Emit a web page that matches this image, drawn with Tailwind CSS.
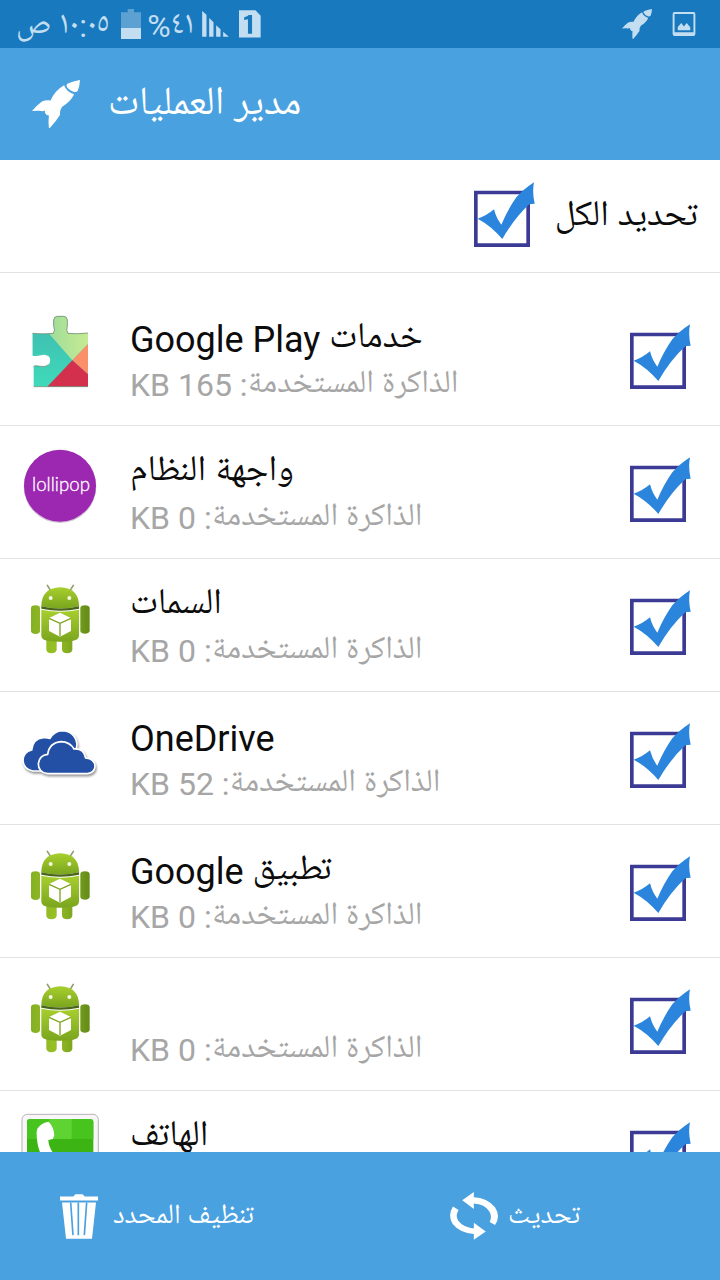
<!DOCTYPE html>
<html lang="ar" dir="rtl">
<head>
<meta charset="utf-8">
<meta name="viewport" content="width=device-width, initial-scale=1">
<title>مدير العمليات</title>
<script src="https://cdn.jsdelivr.net/npm/@tailwindcss/browser@4"></script>
</head>
<body class="flex h-screen flex-col bg-white font-[Roboto,'Noto_Naskh_Arabic_UI','DejaVu_Sans',sans-serif] text-[#0c0c0c]">

<svg class="absolute size-0" aria-hidden="true">
  <defs>
    <linearGradient id="droid" x1="0" x2="0" y1="0" y2="1"><stop offset="0" stop-color="#a8cf2e"/><stop offset="1" stop-color="#7aa51e"/></linearGradient>
    <linearGradient id="limb" x1="0" x2="1" y1="0" y2="0"><stop offset="0" stop-color="#85b022"/><stop offset=".4" stop-color="#97c026"/><stop offset="1" stop-color="#648c18"/></linearGradient>
    <linearGradient id="teal" x1="0" x2="0" y1="0" y2="1"><stop offset="0" stop-color="#3fb7ae"/><stop offset="1" stop-color="#3fdcbb"/></linearGradient>
    <linearGradient id="lime" x1="0" x2="1" y1="0" y2="0"><stop offset="0" stop-color="#9fdc9a"/><stop offset="1" stop-color="#c8ec92"/></linearGradient>
    <clipPath id="piece"><path d="M97 130Q130 133 160 130Q166 122 161 108V90Q162 80 172 79H191Q201 80 202 90V108Q198 122 204 130Q232 133 264 129V290H101V228Q112 226 120 229Q136 232 146 224Q156 211 146 199Q136 191 122 196Q110 199 97 197Z"/></clipPath>
  </defs>
  <symbol id="rocket" viewBox="96 239 145 145">
    <path d="M241 239Q240 258 234 272Q230 276 223 275Q204 268 200 256Q200 250 208 248Q223 242 241 239ZM193 255Q200 275 223 282Q214 303 188 319Q179 331 181 344Q170 362 150 384L147 383Q145 364 147 346Q139 346 137 341Q134 336 135 331Q128 335 120 332Q109 331 96 333Q112 314 126 304Q138 299 152 301Q166 270 193 255Z"/>
  </symbol>
  <symbol id="tick-box" viewBox="90 72 183 195">
    <path fill="none" stroke="#3b3a94" stroke-width="11" d="M95.500 103.500H252.500V261.500H95.500Z"/>
    <path fill="#2b85dc" d="M101 182Q128 173 150 154Q157 181 172 200Q192 153 217 118Q238 94 270 73Q264 102 272 137L256 139Q212 179 175 243Q142 204 101 182Z"/>
  </symbol>
  <symbol id="android" viewBox="60 57 240 240">
    <path stroke="#8f9f6a" stroke-width="5" stroke-linecap="round" d="M142 76 152 92M220 76 210 92"/>
    <path fill="url(#droid)" d="M124 139Q124 84 181 82Q237 84 237 139Q181 152 124 139Z"/>
    <path fill="#48651a" d="M124 139Q181 152 237 139V146Q181 158 124 146Z"/>
    <path fill="url(#limb)" d="M139 232H170V270Q167 280 154 280Q142 280 139 270ZM186 232H217V270Q214 280 201 280Q189 280 186 270ZM93 143Q95 136 106 136Q118 136 120 143V214Q118 222 107 222Q95 222 93 214ZM241 143Q243 136 255 136Q266 136 269 143V214Q266 221 255 221Q243 221 241 214Z"/>
    <path fill="url(#droid)" d="M124 149Q181 161 237 149V228Q235 240 220 242Q181 248 141 242Q126 240 124 228Z"/>
    <circle cx="152" cy="114" r="6" fill="#f4f8e4"/><circle cx="208" cy="114" r="6" fill="#f4f8e4"/>
    <path fill="#fff" d="M180 158 213 174V213L180 230 147 213V174Z"/>
    <path fill="none" stroke="#7ea31f" stroke-width="4" d="M147 175 180 190 213 175M180 190V229"/>
  </symbol>
</svg>

<div class="flex h-12 shrink-0 items-center justify-between bg-[#1979be] px-4 text-[#c3def1]">
  <div class="flex items-center gap-5 pr-2">
    <svg class="size-6" viewBox="217 33 71 75" role="img" aria-label="صورة"><path fill="none" stroke="currentColor" stroke-width="6" d="M223 36H282Q285 36 285 40V101Q285 105 282 105H223Q220 105 220 101V40Q220 36 223 36Z"/><path fill="currentColor" d="M220 96H285V105H220ZM233 90V80L244 67 252 78 261 67 272 81V90Z"/></svg>
    <svg class="size-[30px] fill-current" role="img" aria-label="مدير العمليات"><use href="#rocket"/></svg>
  </div>
  <div class="flex items-center">
    <svg class="ml-[10px] h-7 w-[22px]" viewBox="722 32 64 80" role="img" aria-label="شريحة 1"><path fill="currentColor" d="M722 32H770L785 48V111H722Z"/><path fill="#1979be" d="M737 60V52Q748 50 750 46H760V100H748V58Z"/></svg>
    <svg class="ml-2 h-[26px] w-[27px] fill-current" viewBox="611 34 80 78" role="img" aria-label="الإشارة"><path d="M611 34 624 45V111H611ZM632 55 645 68V111H632ZM653 77 666 89V111H653ZM674 96 691 111H674Z"/></svg>
    <span class="ml-[6px] pt-1 text-[32px] leading-8">٤١%</span>
    <svg class="ml-3 h-[30px] w-5 fill-current" viewBox="366 24 60 90" role="img" aria-label="البطارية"><path opacity=".4" d="M366 34H386V24H405V34H426V81H366Z"/><path d="M366 81H426V114H366Z"/></svg>
    <span class="pt-1 text-[32px] leading-8">١٠:٠٥ ص</span>
  </div>
</div>

<header class="flex h-28 shrink-0 items-center justify-end gap-7 bg-[#4aa1df] px-8 text-white">
  <h1 class="pt-1 text-[40px] leading-12">مدير العمليات</h1>
  <svg class="size-12 fill-current" aria-hidden="true"><use href="#rocket"/></svg>
</header>

<main class="min-h-0 flex-1 overflow-y-auto [scrollbar-width:none]">
  <label class="flex h-[113px] items-center gap-5 border-b border-[#e2e2e2] px-[22px] pb-1 text-[36px]">
    <span class="pt-2">تحديد الكل</span>
    <span class="relative h-[65px] w-[61px]"><input type="checkbox" checked class="absolute inset-0 size-full appearance-none"><svg class="size-full" aria-hidden="true"><use href="#tick-box"/></svg></span>
  </label>

  <ul dir="ltr" class="pt-5">
    <li class="border-b border-[#e2e2e2]"><label class="flex h-[132px] items-start px-5 pt-5">
      <svg class="size-20 shrink-0" viewBox="60 69 240 240" aria-hidden="true">
        <g clip-path="url(#piece)"><path fill="url(#teal)" d="M90 70H270V300H90Z"/><path fill="url(#lime)" d="M146 130V70H270V156L217 211Z"/><path fill="#fb8f6a" d="M217 211 270 156V258Z"/><path fill="#d3304d" d="M140 292 217 211 270 258V292Z"/></g>
        <path fill="none" stroke="#6d7f68" stroke-width="2" d="M97 130Q130 133 160 130Q166 122 161 108V90Q162 80 172 79H191Q201 80 202 90V108Q198 122 204 130Q232 133 264 129M101 228Q112 226 120 229Q136 232 146 224M101 290H264"/>
      </svg>
      <span class="ml-[30px] flex-1"><span dir="rtl" class="block h-[50px] text-left text-[36px] leading-[54px]">خدمات Google Play</span><span dir="rtl" class="block text-left text-[32px] leading-11 text-[#a6a6a6]">الذاكرة المستخدمة: 165 KB</span></span>
      <span class="relative mt-[11px] mr-[9px] h-[65px] w-[61px]"><input type="checkbox" checked class="absolute inset-0 size-full appearance-none"><svg class="size-full" aria-hidden="true"><use href="#tick-box"/></svg></span>
    </label></li>
    <li class="border-b border-[#e2e2e2]"><label class="flex h-[132px] items-start px-5 pt-5">
      <svg class="size-20 shrink-0" viewBox="60 48 240 240" aria-hidden="true"><circle cx="180" cy="170" r="109" fill="#cfc4d2"/><circle cx="180" cy="167" r="108" fill="#9c27b0"/><text x="183" y="183" text-anchor="middle" fill="#fff" stroke="#fff" stroke-width="1" font-family="Lato" font-weight="300" font-size="56">lollipop</text></svg>
      <span class="ml-[30px] flex-1"><span dir="rtl" class="block h-[50px] text-left text-[36px] leading-[54px]">واجهة النظام</span><span dir="rtl" class="block text-left text-[32px] leading-11 text-[#a6a6a6]">الذاكرة المستخدمة: 0 KB</span></span>
      <span class="relative mt-[11px] mr-[9px] h-[65px] w-[61px]"><input type="checkbox" checked class="absolute inset-0 size-full appearance-none"><svg class="size-full" aria-hidden="true"><use href="#tick-box"/></svg></span>
    </label></li>
    <li class="border-b border-[#e2e2e2]"><label class="flex h-[132px] items-start px-5 pt-5">
      <svg class="size-20 shrink-0" aria-hidden="true"><use href="#android"/></svg>
      <span class="ml-[30px] flex-1"><span dir="rtl" class="block h-[50px] text-left text-[36px] leading-[54px]">السمات</span><span dir="rtl" class="block text-left text-[32px] leading-11 text-[#a6a6a6]">الذاكرة المستخدمة: 0 KB</span></span>
      <span class="relative mt-[11px] mr-[9px] h-[65px] w-[61px]"><input type="checkbox" checked class="absolute inset-0 size-full appearance-none"><svg class="size-full" aria-hidden="true"><use href="#tick-box"/></svg></span>
    </label></li>
    <li class="border-b border-[#e2e2e2]"><label class="flex h-[132px] items-start px-5 pt-5">
      <svg class="size-20 shrink-0 overflow-visible drop-shadow-[1px_2px_1px_rgba(0,0,0,0.4)]" viewBox="60 36 240 240" aria-hidden="true">
        <g fill="#2350a4" stroke="#fff" stroke-width="5"><path d="M98 213Q70 207 69 181Q70 156 95 150Q98 116 130 113Q140 112 150 115Q163 93 187 92Q225 94 231 132L220 213Z"/><path d="M143 221Q115 217 115 191Q118 165 143 163Q148 128 183 125Q210 126 222 147Q252 145 257 174Q285 177 285 200Q283 218 263 221Z"/></g>
      </svg>
      <span class="ml-[30px] flex-1"><span dir="rtl" class="block h-[50px] text-left text-[36px] leading-[54px]">OneDrive</span><span dir="rtl" class="block text-left text-[32px] leading-11 text-[#a6a6a6]">الذاكرة المستخدمة: 52 KB</span></span>
      <span class="relative mt-[11px] mr-[9px] h-[65px] w-[61px]"><input type="checkbox" checked class="absolute inset-0 size-full appearance-none"><svg class="size-full" aria-hidden="true"><use href="#tick-box"/></svg></span>
    </label></li>
    <li class="border-b border-[#e2e2e2]"><label class="flex h-[132px] items-start px-5 pt-5">
      <svg class="size-20 shrink-0" aria-hidden="true"><use href="#android"/></svg>
      <span class="ml-[30px] flex-1"><span dir="rtl" class="block h-[50px] text-left text-[36px] leading-[54px]">تطبيق Google</span><span dir="rtl" class="block text-left text-[32px] leading-11 text-[#a6a6a6]">الذاكرة المستخدمة: 0 KB</span></span>
      <span class="relative mt-[11px] mr-[9px] h-[65px] w-[61px]"><input type="checkbox" checked class="absolute inset-0 size-full appearance-none"><svg class="size-full" aria-hidden="true"><use href="#tick-box"/></svg></span>
    </label></li>
    <li class="border-b border-[#e2e2e2]"><label class="flex h-[132px] items-start px-5 pt-5">
      <svg class="size-20 shrink-0" aria-hidden="true"><use href="#android"/></svg>
      <span class="ml-[30px] flex-1"><span dir="rtl" class="block h-[50px] text-left text-[36px] leading-[54px]"></span><span dir="rtl" class="block text-left text-[32px] leading-11 text-[#a6a6a6]">الذاكرة المستخدمة: 0 KB</span></span>
      <span class="relative mt-[11px] mr-[9px] h-[65px] w-[61px]"><input type="checkbox" checked class="absolute inset-0 size-full appearance-none"><svg class="size-full" aria-hidden="true"><use href="#tick-box"/></svg></span>
    </label></li>
    <li><label class="flex h-[132px] items-start px-5 pt-5">
      <svg class="size-20 shrink-0" viewBox="60 63 240 240" aria-hidden="true"><rect x="66" y="73" width="229" height="220" rx="16" fill="#f8f6f8" stroke="#b9b3b9" stroke-width="3"/><rect x="81" y="87" width="199" height="192" rx="10" fill="#3cb514"/><path fill="#47c51e" d="M91 87H270Q280 87 280 97V147H81V97Q81 87 91 87Z"/><path fill="#5ed332" d="M148 87H215V147H148Z"/><path fill="#fff" d="M112 116Q124 98 146 95Q161 110 163 135L159 147 145 150Q146 178 170 200L150 230Q108 190 110 125Z"/></svg>
      <span class="ml-[30px] flex-1"><span dir="rtl" class="block h-[50px] text-left text-[36px] leading-[54px]">الهاتف</span></span>
      <span class="relative mt-[11px] mr-[9px] h-[65px] w-[61px]"><input type="checkbox" checked class="absolute inset-0 size-full appearance-none"><svg class="size-full" aria-hidden="true"><use href="#tick-box"/></svg></span>
    </label></li>
  </ul>
</main>

<footer dir="ltr" class="grid h-32 shrink-0 grid-cols-2 bg-[#4aa1df] text-[28px] text-white">
  <button type="button" class="flex items-center gap-[15px] pl-15">
    <svg class="h-[45px] w-[38px] fill-current" viewBox="180 311 114 134" aria-hidden="true"><path d="M180 318H220L226 311H248L254 318H294V330H180ZM186 336H288L276 445H198Z"/><path stroke="#4aa1df" stroke-width="5" d="M212 336 219 434M235 336V434M260 336 253 434"/></svg>
    <span class="pt-1">تنظيف المحدد</span>
  </button>
  <button type="button" class="flex items-center gap-[10px] pl-[90px]">
    <svg class="size-12 fill-current" viewBox="90 306 145 145" aria-hidden="true"><path d="M127 331 162 306V322Q202 324 226 352Q244 380 226 406L210 397Q218 379 209 365Q195 343 162 341V357ZM198 425 162 450V433Q121 431 98 403Q82 376 99 350L116 360Q105 377 115 393Q130 413 162 416V399Z"/></svg>
    <span class="pt-1">تحديث</span>
  </button>
</footer>
</body>
</html>
